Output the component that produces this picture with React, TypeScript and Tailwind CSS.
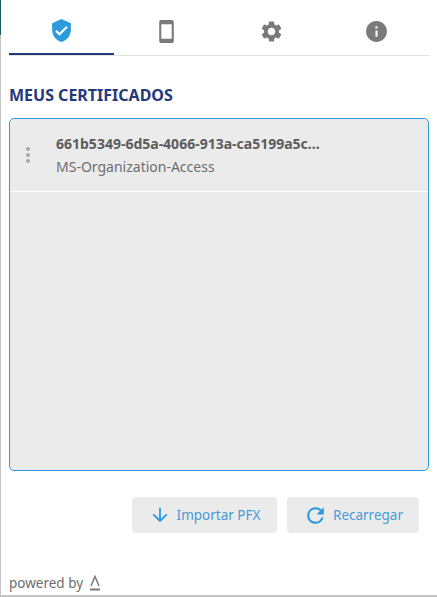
import { MdVerifiedUser, MdSmartphone, MdSettings, MdInfo, MdArrowDownward, MdRefresh } from 'react-icons/md'

const tabs = [
  { key: 'certs', Icon: MdVerifiedUser, active: true },
  { key: 'device', Icon: MdSmartphone, active: false },
  { key: 'settings', Icon: MdSettings, active: false },
  { key: 'info', Icon: MdInfo, active: false },
]

export default function App() {
  return (
    <div className="flex h-[597px] w-[437px] overflow-hidden bg-white font-['Noto_Sans',sans-serif]">
      {/* Sliver of the window behind */}
      <div className="flex w-px shrink-0 flex-col bg-[#c4c4c4]">
        <div className="h-[35px] bg-[#1f5a64]" />
      </div>

      <div className="flex min-w-0 flex-1 flex-col border-b-2 border-[#c4c4c4] pr-2 pl-2">
        {/* Tabs */}
        <div className="flex h-[56px] shrink-0 border-b border-[#e2e2e2]">
          {tabs.map(({ key, Icon, active }) => (
            <div
              key={key}
              className={
                active
                  ? 'flex h-[55px] flex-1 items-center justify-center border-b-[2px] border-[#24397a] pt-[8px]'
                  : 'flex h-[55px] flex-1 items-center justify-center pt-[8px]'
              }
            >
              <Icon className={active ? 'text-[#2b9bdd]' : 'text-[#7a7a7a]'} size={25} />
            </div>
          ))}
        </div>

        <h2 className="mt-[29px] text-[16px] leading-[20px] font-bold text-[#24397a]">MEUS CERTIFICADOS</h2>

        {/* Certificate list */}
        <div className="mt-[13px] h-[353px] shrink-0 rounded-[5px] border border-[#2b9bdd] bg-[#ebebeb]">
          <div className="flex h-[73px] border-b border-white">
            <div className="flex w-[36px] shrink-0 flex-col items-center gap-[2px] pt-[28px]">
              <span className="h-[4px] w-[4px] rounded-full bg-[#a8a8a8]" />
              <span className="h-[4px] w-[4px] rounded-full bg-[#a8a8a8]" />
              <span className="h-[4px] w-[4px] rounded-full bg-[#a8a8a8]" />
            </div>
            <div className="min-w-0 pt-[15px] pl-[10px]">
              <p className="text-[14px] leading-[20px] font-bold text-[#5c5c5c]">661b5349-6d5a-4066-913a-ca5199a5c...</p>
              <p className="mt-[3px] text-[14px] leading-[20px] text-[#6e6e6e]">MS-Organization-Access</p>
            </div>
          </div>
        </div>

        {/* Actions */}
        <div className="mt-[26px] mr-[10px] flex justify-end gap-[10px]">
          <button className="flex h-[36px] w-[145px] items-center justify-center gap-[6px] rounded-[4px] bg-[#ebebeb] text-[13.5px] text-[#4a9ad6]">
            <MdArrowDownward className="text-[#2b9bdd]" size={22} />
            Importar PFX
          </button>
          <button className="flex h-[36px] w-[132px] items-center justify-center gap-[5px] rounded-[4px] bg-[#ebebeb] text-[13.5px] text-[#4a9ad6]">
            <MdRefresh className="text-[#2b9bdd]" size={25} />
            Recarregar
          </button>
        </div>

        {/* Footer */}
        <div className="mt-auto mb-[3px] flex items-center gap-[6px] text-[13.5px] leading-[18px] text-[#6e6e6e]">
          powered by
          <svg viewBox="0 0 12 16" className="h-[16px] w-[12px]" fill="none" stroke="#7a7a7a">
            <path d="M2 11 L6 1.5 L10 11" strokeWidth="1.5" />
            <path d="M1 14.5 H11" strokeWidth="2" />
          </svg>
        </div>
      </div>
    </div>
  )
}
